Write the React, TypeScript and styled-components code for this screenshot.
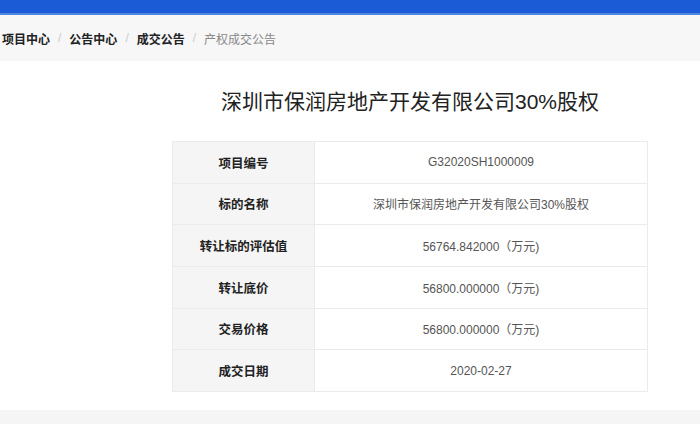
import * as React from "react"
import styled, { createGlobalStyle } from "styled-components"

const GlobalStyle = createGlobalStyle`
  html, body {
    margin: 0;
    padding: 0;
    background: #fff;
    font-family: "Microsoft YaHei", "Liberation Sans", "Noto Sans CJK SC", sans-serif;
  }
`

const TopBar = styled.div`
  height: 13px;
  background: #1b5bd6;
  border-bottom: 2px solid #4f86e0;
`

const Crumbs = styled.div`
  height: 46px;
  background: #f7f7f7;
  display: flex;
  align-items: center;
  padding-left: 2px;
  font-size: 12px;
`

const Crumb = styled.span<{ current?: boolean }>`
  color: ${({ current }) => (current ? "#888" : "#222")};
  font-weight: ${({ current }) => (current ? 400 : 700)};
`

const Sep = styled.span`
  color: #ccc;
  padding: 0 8px;
`

const Main = styled.div`
  width: 476px;
  margin-left: 172px;
  padding-top: 28px;
`

const Title = styled.h1`
  margin: 0 0 26px;
  height: 26px;
  line-height: 26px;
  text-align: center;
  font-size: 21px;
  font-weight: 400;
  color: #222;
`

const Table = styled.div`
  border: 1px solid #ebebeb;
  border-bottom: none;
`

const Row = styled.div`
  display: grid;
  grid-template-columns: 142px 1fr;
  height: 41.67px;
  border-bottom: 1px solid #ebebeb;
  box-sizing: border-box;
`

const Label = styled.div`
  display: flex;
  align-items: center;
  justify-content: center;
  background: #f5f5f5;
  border-right: 1px solid #ebebeb;
  font-size: 12.5px;
  font-weight: 700;
  color: #222;
`

const Value = styled.div`
  display: flex;
  align-items: center;
  justify-content: center;
  font-size: 12px;
  color: #555;
`

const Footer = styled.div`
  margin-top: 18px;
  height: 20px;
  background: #f5f5f5;
`

const rows: [string, string][] = [
  ["项目编号", "G32020SH1000009"],
  ["标的名称", "深圳市保润房地产开发有限公司30%股权"],
  ["转让标的评估值", "56764.842000（万元)"],
  ["转让底价", "56800.000000（万元)"],
  ["交易价格", "56800.000000（万元)"],
  ["成交日期", "2020-02-27"],
]

const App = () => (
  <>
    <GlobalStyle />
    <TopBar />
    <Crumbs>
      <Crumb>项目中心</Crumb>
      <Sep>/</Sep>
      <Crumb>公告中心</Crumb>
      <Sep>/</Sep>
      <Crumb>成交公告</Crumb>
      <Sep>/</Sep>
      <Crumb current>产权成交公告</Crumb>
    </Crumbs>
    <Main>
      <Title>深圳市保润房地产开发有限公司30%股权</Title>
      <Table>
        {rows.map(([label, value]) => (
          <Row key={label}>
            <Label>{label}</Label>
            <Value>{value}</Value>
          </Row>
        ))}
      </Table>
    </Main>
    <Footer />
  </>
)

export default App
